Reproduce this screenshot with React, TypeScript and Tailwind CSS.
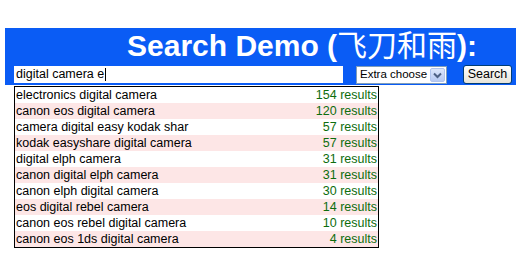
import React from 'react';

const ROWS = [
  { q: 'electronics digital camera', n: 154 },
  { q: 'canon eos digital camera', n: 120 },
  { q: 'camera digital easy kodak shar', n: 57 },
  { q: 'kodak easyshare digital camera', n: 57 },
  { q: 'digital elph camera', n: 31 },
  { q: 'canon digital elph camera', n: 31 },
  { q: 'canon elph digital camera', n: 30 },
  { q: 'eos digital rebel camera', n: 14 },
  { q: 'canon eos rebel digital camera', n: 10 },
  { q: 'canon eos 1ds digital camera', n: 4 },
];

export default function App() {
  return (
    <div className="w-[527px] h-[263px] bg-white overflow-hidden" style={{ fontFamily: '"Liberation Sans", Arial, sans-serif' }}>
      {/* Header bar */}
      <div className="ml-[5px] mt-[28px] w-[511px] h-[57px] bg-[#0a5cf5] pt-[3px]">
        <h1 className="pl-[122px] h-[29px] text-[30px] leading-[29px] font-bold text-white whitespace-nowrap"
          style={{ fontFamily: '"Liberation Sans", Arial, "Noto Sans CJK SC", sans-serif' }}>
          Search Demo (<span className="font-normal">飞刀和雨</span>):
        </h1>
        <div className="flex items-start mt-[6px]">
          {/* text input */}
          <div className="ml-[9px] w-[329px] h-[17px] bg-white flex items-center pl-[2px] text-[12.5px] text-black leading-none">
            digital camera e<span className="w-px h-[13px] bg-black ml-px" />
          </div>
          {/* select */}
          <div className="ml-[13px] w-[91px] h-[18px] bg-white border border-[#7f9db9] flex items-center justify-between pl-[3px] pr-px">
            <span className="text-[11.5px] leading-none text-black whitespace-nowrap">Extra choose</span>
            <span className="w-[15px] h-[14px] shrink-0 rounded-[2px] bg-gradient-to-b from-[#dce6fb] to-[#b6c9f3] border border-[#b0c4ee] flex items-center justify-center">
              <svg width="9" height="7" viewBox="0 0 9 7">
                <path d="M1 1.5 L4.5 5 L8 1.5" fill="none" stroke="#4d6185" strokeWidth="2" />
              </svg>
            </span>
          </div>
          {/* button */}
          <div className="ml-[16px] -mt-px w-[49px] h-[19px] rounded-[3px] border border-[#003c74] bg-gradient-to-b from-white to-[#e6e3d8] flex items-center justify-center text-[12.5px] leading-none text-black">
            Search
          </div>
        </div>
      </div>

      {/* Suggestions list */}
      <div className="ml-[14px] mt-px w-[365px] border border-black">
        {ROWS.map((r, i) => (
          <div key={i} className={`h-[16px] flex items-center justify-between pl-px pr-px text-[12.5px] leading-none ${i % 2 ? 'bg-[#fde6e6]' : 'bg-white'}`}>
            <span className="text-black">{r.q}</span>
            <span className="text-[#0d6d0d]">{r.n} results</span>
          </div>
        ))}
      </div>
    </div>
  );
}
